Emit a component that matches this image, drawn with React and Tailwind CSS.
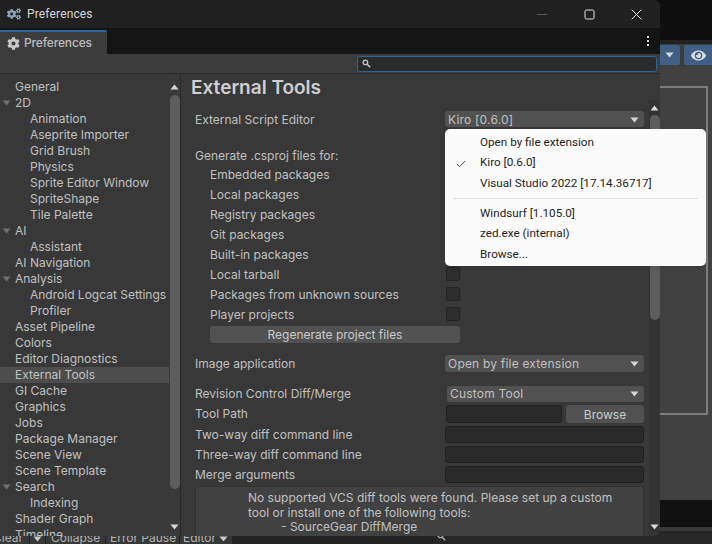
import React from 'react';
import { FaCog, FaCogs, FaEye } from 'react-icons/fa';

const tree = [
  { label: 'General', depth: 0 },
  { label: '2D', depth: 0, open: true },
  { label: 'Animation', depth: 1 },
  { label: 'Aseprite Importer', depth: 1 },
  { label: 'Grid Brush', depth: 1 },
  { label: 'Physics', depth: 1 },
  { label: 'Sprite Editor Window', depth: 1 },
  { label: 'SpriteShape', depth: 1 },
  { label: 'Tile Palette', depth: 1 },
  { label: 'AI', depth: 0, open: true },
  { label: 'Assistant', depth: 1 },
  { label: 'AI Navigation', depth: 0 },
  { label: 'Analysis', depth: 0, open: true },
  { label: 'Android Logcat Settings', depth: 1 },
  { label: 'Profiler', depth: 1 },
  { label: 'Asset Pipeline', depth: 0 },
  { label: 'Colors', depth: 0 },
  { label: 'Editor Diagnostics', depth: 0 },
  { label: 'External Tools', depth: 0, selected: true },
  { label: 'GI Cache', depth: 0 },
  { label: 'Graphics', depth: 0 },
  { label: 'Jobs', depth: 0 },
  { label: 'Package Manager', depth: 0 },
  { label: 'Scene View', depth: 0 },
  { label: 'Scene Template', depth: 0 },
  { label: 'Search', depth: 0, open: true },
  { label: 'Indexing', depth: 1 },
  { label: 'Shader Graph', depth: 0 },
  { label: 'Timeline', depth: 0 }
];

const csproj = [
  'Embedded packages',
  'Local packages',
  'Registry packages',
  'Git packages',
  'Built-in packages',
  'Local tarball',
  'Packages from unknown sources',
  'Player projects'
];

function Triangle({ color = '#c4c4c4', up = false, className = '', style }) {
  return (
    <svg width="9" height="6" viewBox="0 0 9 6" className={className} style={style}>
      <path d={up ? 'M4.5 0.5 L8.5 5.5 L0.5 5.5 Z' : 'M0.5 0.5 L8.5 0.5 L4.5 5.5 Z'} fill={color} />
    </svg>
  );
}

function SearchGlyph({ color = '#c8c8c8' }) {
  return (
    <svg width="9" height="9" viewBox="0 0 9 9">
      <circle cx="3.4" cy="3.4" r="2.3" fill="none" stroke={color} strokeWidth="1.3" />
      <path d="M5.2 5.2 L8.2 8.2" stroke={color} strokeWidth="1.6" />
    </svg>
  );
}

function Dropdown({ label, className = '' }) {
  return (
    <div className={`h-full flex-1 flex items-center justify-between rounded-[3px] bg-[#515151] pl-[3px] pr-[5px] ${className}`}>
      <span className="tracking-[0.2px]">{label}</span>
      <Triangle color="#d6d6d6" />
    </div>
  );
}

function TextBox() {
  return <div className="h-full flex-1 rounded-[3px] border border-[#212121] bg-[#2a2a2a]" />;
}

function Field({ label, className, labelClass = '', children }) {
  return (
    <div className={`flex items-center ${className}`}>
      <div className={`w-[250px] shrink-0 ${labelClass}`}>{label}</div>
      {children}
    </div>
  );
}

function ScrollBar({ className = '', arrowTop, thumbTop, thumbHeight, bg }) {
  return (
    <div className={`relative w-[11px] shrink-0 flex flex-col items-center ${bg} ${className}`}>
      <Triangle up color="#d8d8d8" className="absolute" style={{ top: arrowTop }} />
      <div
        className="absolute left-px right-0 rounded-full bg-[#5d5d5d]"
        style={{ top: thumbTop, height: thumbHeight }} />
      <Triangle color="#d8d8d8" className="absolute bottom-[6px]" />
    </div>
  );
}

function EditorBehind() {
  return (
    <div className="absolute inset-0 flex flex-col bg-[#0e0e0e] font-['Inter',sans-serif] text-[12px] text-[#b4b4b4]">
      <div className="h-[40px] shrink-0" />
      <div className="h-[4px] shrink-0 bg-[#222222]" />
      <div className="h-[22px] shrink-0 flex justify-end items-center gap-[4px] bg-[#3c3c3c]">
        <div className="h-[20px] w-[21px] rounded-[2px] bg-[#3f5f85] flex items-center justify-center">
          <Triangle color="#d0d8e0" />
        </div>
        <div className="h-[20px] w-[28px] rounded-l-[2px] bg-[#3f5f85] flex items-center justify-center text-[#d8dee6]">
          <FaEye size={15} />
        </div>
      </div>
      <div className="h-[434px] shrink-0 bg-[#414141] pt-[20px]">
        <div className="ml-auto mr-[4px] h-[329px] w-[60px] border-2 border-[#7d7d7d]" />
      </div>
      <div className="h-[27px] shrink-0 bg-[#111111]" />
      <div className="h-[4px] shrink-0 bg-[#3a3a3a]" />
      <div className="h-[13px] shrink-0 flex bg-[#262626] overflow-hidden whitespace-nowrap">
        <div className="w-[232px] shrink-0 flex items-start bg-[#383838] leading-[14px]">
          <span className="-ml-[7px] w-[36px] shrink-0">Clear</span>
          <span className="w-[16px] h-full shrink-0 flex justify-center pt-[5px] border-l border-[#222222]">
            <Triangle color="#c8c8c8" />
          </span>
          <span className="w-[60px] shrink-0 border-l border-[#222222] pl-[5px] h-full">Collapse</span>
          <span className="w-[74px] shrink-0 border-l border-[#222222] pl-[4px] h-full">Error Pause</span>
          <span className="flex items-start gap-[3px] border-l border-[#222222] pl-[3px] h-full">
            Editor <Triangle color="#c8c8c8" className="mt-[5px]" />
          </span>
        </div>
        <div className="w-[201px] shrink-0 bg-[#222222]" />
        <div className="flex-1 pl-[4px] pt-px">
          <SearchGlyph color="#aaaaaa" />
        </div>
      </div>
    </div>
  );
}

function TitleBar() {
  return (
    <div className="relative h-[28px] shrink-0 flex items-center bg-[#202020] pl-[7px] font-['Roboto',sans-serif] text-[12px] text-[#d6d6d6]">
      <FaCogs size={14} className="text-[#8fa6b8]" />
      <span className="ml-[6px] tracking-[0.15px]">Preferences</span>
      <div className="ml-auto flex items-center">
        <svg width="10" height="10" viewBox="0 0 10 10" className="mr-[37px]">
          <path d="M0 5.5 H10" stroke="#5a5a5a" strokeWidth="1" />
        </svg>
        <svg width="11" height="11" viewBox="0 0 11 11" className="mr-[36px]">
          <rect x="1" y="1" width="9" height="9" rx="1.5" fill="none" stroke="#e4e4e4" strokeWidth="1" />
        </svg>
        <svg width="11" height="11" viewBox="0 0 11 11" className="mr-[18px]">
          <path d="M0.7 0.7 L10.3 10.3 M10.3 0.7 L0.7 10.3" stroke="#e4e4e4" strokeWidth="1" />
        </svg>
      </div>
    </div>
  );
}

function TabStrip() {
  return (
    <div className="h-[26px] shrink-0 flex items-end justify-between bg-[#141414]">
      <div className="h-[24px] w-[107px] flex items-center gap-[4px] rounded-tr-[2px] border-t-2 border-[#2f6596] bg-[#3c3c3c] pl-[7px] font-medium text-[#bdbdbd]">
        <FaCog size={13} className="text-[#c8c8c8]" />
        <span className="tracking-[-0.15px]">Preferences</span>
      </div>
      <div className="h-full flex flex-col items-center justify-center gap-[2px] pr-[11px]">
        <div className="h-[2px] w-[2px] bg-[#d8d8d8]" />
        <div className="h-[2px] w-[2px] bg-[#d8d8d8]" />
        <div className="h-[2px] w-[2px] bg-[#d8d8d8]" />
      </div>
    </div>
  );
}

function SearchRow() {
  return (
    <div className="h-[20px] shrink-0 flex items-center justify-end border-b border-[#2b2b2b] bg-[#3c3c3c] pr-[3px]">
      <div className="h-[16px] w-[300px] flex items-center rounded-[3px] border border-[#2f6596] bg-[#2a2a2a] pl-[4px]">
        <SearchGlyph />
      </div>
    </div>
  );
}

function Sidebar() {
  return (
    <div className="w-[181px] shrink-0 flex border-r border-[#2a2a2a] bg-[#383838]">
      <div className="w-[169px] shrink-0 pt-[5px]">
        {tree.map((item) => (
          <div
            key={item.label}
            className={`relative h-[16px] flex items-center whitespace-nowrap ${item.depth === 1 ? 'pl-[30px]' : 'pl-[15px]'} ${item.selected ? 'bg-[#4d4d4d]' : ''}`}>
            {item.open && <Triangle color="#6f6f6f" className="absolute left-[2px] top-[5px]" />}
            {item.label}
          </div>
        ))}
      </div>
      <ScrollBar arrowTop={10} thumbTop={21} thumbHeight={394} bg="bg-[#3a3a3a]" />
    </div>
  );
}

function Settings() {
  return (
    <div className="flex-1 flex min-w-0">
      <div className="flex-1 min-w-0 flex flex-col pl-[14px] pr-[5px] pt-[2px]">
        <div className="h-[24px] flex items-center -ml-[4px] text-[19px] font-semibold text-[#cfcfcf]">
          External Tools
        </div>
        <Field label="External Script Editor" labelClass="translate-y-px" className="mt-[11px] h-[16px]">
          <Dropdown label="Kiro [0.6.0]" className="pt-px" />
        </Field>
        <div className="mt-[20px] h-[16px] flex items-center translate-y-px">Generate .csproj files for:</div>
        <div className="mt-px">
          {csproj.map((name) => (
            <div key={name} className="h-[20px] flex items-center pl-[15px]">
              <span className="w-[236px] shrink-0 translate-y-px">{name}</span>
              <div className="h-[14px] w-[14px] rounded-[2px] border border-[#232323] bg-[#2d2d2d]" />
            </div>
          ))}
        </div>
        <div className="ml-[15px] mt-[2px] h-[17px] w-[250px] flex items-center justify-center rounded-[3px] bg-[#515151] text-[#cacaca]">
          Regenerate project files
        </div>
        <Field label="Image application" className="mt-[12px] h-[17px]">
          <Dropdown label="Open by file extension" />
        </Field>
        <Field label="Revision Control Diff/Merge" className="mt-[14px] h-[16px]">
          <Dropdown label="Custom Tool" className="ml-[2px]" />
        </Field>
        <Field label="Tool Path" className="mt-[3px] h-[18px]">
          <div className="h-full flex-1 flex gap-[4px] pl-px">
            <TextBox />
            <div className="h-full w-[78px] flex items-center justify-center rounded-[3px] bg-[#515151] pt-px text-[#cacaca]">
              Browse
            </div>
          </div>
        </Field>
        <Field label="Two-way diff command line" className="mt-[3px] h-[17px]">
          <TextBox />
        </Field>
        <Field label="Three-way diff command line" className="mt-[3px] h-[17px]">
          <TextBox />
        </Field>
        <Field label="Merge arguments" className="mt-[3px] h-[17px]">
          <TextBox />
        </Field>
        <div className="mt-[3px] h-[50px] rounded-t-[3px] border border-b-0 border-[#323232] bg-[#414141] pl-[52px] pt-[4px] leading-[14.5px] whitespace-nowrap">
          <div>No supported VCS diff tools were found. Please set up a custom</div>
          <div>tool or install one of the following tools:</div>
          <div className="pl-[33px]">- SourceGear DiffMerge</div>
        </div>
      </div>
      <ScrollBar className="mt-[26px]" arrowTop={5} thumbTop={15} thumbHeight={205} bg="bg-[#333333]" />
    </div>
  );
}

function EditorMenu() {
  const row = 'h-[20.7px] flex items-center pl-[35px]';
  return (
    <div className="absolute left-[445px] top-[129px] h-[137px] w-[261px] rounded-[5px] bg-[#fbfbfb] py-[3px] font-['Roboto',sans-serif] text-[11.7px] text-[#1e1e1e] shadow-sm">
      <div className={row}>Open by file extension</div>
      <div className={`${row} relative`}>
        <svg width="10" height="8" viewBox="0 0 10 8" className="absolute left-[11px] top-[7px]">
          <path d="M1 4 L3.6 6.8 L9 1" fill="none" stroke="#555555" strokeWidth="1" />
        </svg>
        Kiro [0.6.0]
      </div>
      <div className={row}>Visual Studio 2022 [17.14.36717]</div>
      <div className="mx-[8px] my-[4px] h-px bg-[#dddddd]" />
      <div className={row}>Windsurf [1.105.0]</div>
      <div className={row}>zed.exe (internal)</div>
      <div className={row}>Browse...</div>
    </div>
  );
}

export default function App() {
  return (
    <div className="relative h-[544px] w-[712px] overflow-hidden">
      <EditorBehind />
      <div className="absolute left-0 top-0 h-[536px] w-[660px] flex flex-col overflow-hidden rounded-r-[7px] bg-[#383838] font-['Inter',sans-serif] text-[12px] text-[#c0c0c0]">
        <TitleBar />
        <TabStrip />
        <SearchRow />
        <div className="flex-1 min-h-0 flex">
          <Sidebar />
          <Settings />
        </div>
      </div>
      <EditorMenu />
    </div>
  );
}
